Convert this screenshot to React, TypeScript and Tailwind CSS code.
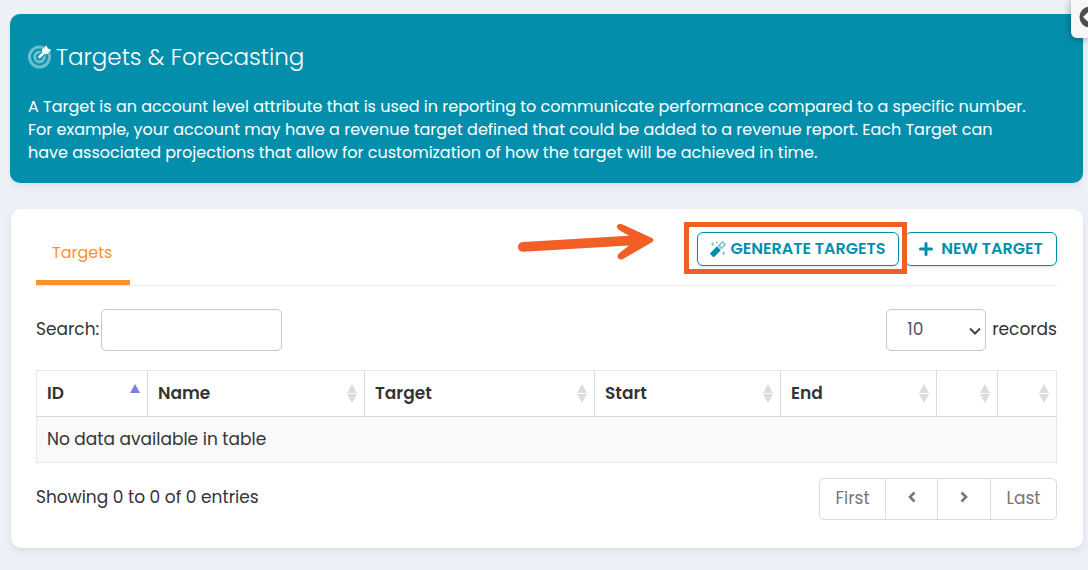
import { useState } from "react";

interface Column {
  label: string;
  width: string;
  hint: string;
}

const COLUMNS: Column[] = [
  { label: "ID", width: "w-[111px]", hint: "ID" },
  { label: "Name", width: "w-[217px]", hint: "Name" },
  { label: "Target", width: "w-[230px]", hint: "Target" },
  { label: "Start", width: "w-[186px]", hint: "Start" },
  { label: "End", width: "w-[156px]", hint: "End" },
  { label: "", width: "w-[61px]", hint: "Edit" },
  { label: "", width: "w-[59px]", hint: "Delete" },
];

const PAGE_SIZES = ["10", "25", "50", "100"];

function BullseyeIcon() {
  return (
    <svg viewBox="0 0 24 24" className="size-6 shrink-0" fill="none" aria-hidden="true">
      <g stroke="#fff" strokeOpacity="0.42">
        <circle cx="11.500" cy="12" r="10" strokeWidth="3" />
        <circle cx="11.500" cy="12" r="4.800" strokeWidth="3.200" />
      </g>
      <path d="M12 11.500 20 3.500" stroke="#038fac" strokeWidth="5" />
      <path d="M11.500 12 18 5.500" stroke="#fff" strokeWidth="2.600" strokeLinecap="round" />
      <path d="M14.300 4.800 18.300.9l1.200 2.900 3.200 1.200-4 4-3.600-.7z" fill="#fff" stroke="#fff" strokeWidth="0.800" strokeLinejoin="round" />
    </svg>
  );
}

function WandIcon() {
  return (
    <svg viewBox="0 0 16 16" className="size-4 shrink-0" fill="#038fac" aria-hidden="true">
      <path d="M.4 11.900 7 5.300l3.900 3.900-6.600 6.600q-.7.500-1.400 0L.4 13.300q-.6-.7 0-1.400z" />
      <path d="m7.600 4.700 4.300-4.300q.7-.6 1.400 0l2.400 2.400q.6.7 0 1.400l-4.300 4.300zm2.700-.1 1.300 1.300 2.500-2.500-1.300-1.300z" fillOpacity="0.5" fillRule="evenodd" />
      <path d="m2.600.8.700 1.600 1.600.7-1.600.7-.7 1.600-.7-1.600L.3 3.100l1.600-.7zM6.800 0l.4 1.100 1.100.4-1.100.5-.4 1.100-.5-1.100-1.100-.5 1.100-.4zM13.600 9.800l.7 1.600 1.600.7-1.600.7-.7 1.600-.7-1.600-1.600-.7 1.600-.7z" fillOpacity="0.55" />
    </svg>
  );
}

function SortIcon({ active }: { active?: boolean }) {
  return (
    <svg viewBox="0 0 12 20" className="h-5 w-3 shrink-0" aria-hidden="true">
      <path d="M1 9 6 0l5 9z" fill={active ? "#7c80dd" : "#dcdcdc"} />
      {!active && <path d="M1 10h10l-5 9z" fill="#dcdcdc" />}
    </svg>
  );
}

function Chevron({ d }: { d: string }) {
  return (
    <svg viewBox="0 0 12 12" className="size-3" fill="none" stroke="currentColor" strokeWidth="2.6" aria-hidden="true">
      <path d={d} />
    </svg>
  );
}

function Arrow() {
  return (
    <svg viewBox="0 0 136 36" className="absolute -top-2 -left-[179px] h-9 w-[136px]" aria-hidden="true">
      <path
        d="M5 18.1 111 11.8 101 6q-3.500-2.500-1.500-5 2-2 4.500-.7L134 14q3 2 0 4.200L105 35q-3 1.500-5-1-1.500-2.500 1.500-5L111 21.500 5 27.800q-5-.6-5-4.900 0-4.200 5-4.800z"
        fill="#f15e26"
      />
    </svg>
  );
}

export default function App() {
  const [search, setSearch] = useState("");
  const [pageSize, setPageSize] = useState("10");

  return (
    <div className="relative min-h-screen overflow-hidden bg-[#edf0f6] pt-3.5 pr-[5px] pb-5 pl-2.5 font-[Poppins,Inter,sans-serif] text-[17px] text-[#343434]">
      {/* Side drawer handle */}
      <button
        type="button"
        aria-label="Open side panel"
        className="absolute top-0 right-0 flex h-[38px] w-[17px] items-center overflow-hidden rounded-bl-md bg-[#f7f7f7] pb-1 pl-2 shadow-[0_1px_8px_rgba(0,0,0,0.35)]"
      >
        <svg viewBox="0 0 22 22" className="size-[22px] shrink-0" aria-hidden="true">
          <circle cx="11" cy="11" r="10.500" fill="#4d4d4d" />
          <path d="m11 4.500-7 6.500 7 6.500v-4h6v-5h-6z" fill="#fff" />
        </svg>
      </button>

      {/* Intro banner */}
      <header className="rounded-[10px] bg-[#038fac] px-[18px] pt-[27px] pb-[19px] text-white shadow-md shadow-slate-300/40">
        <h1 className="flex items-center gap-1 text-[23px] leading-8 font-light">
          <BullseyeIcon />
          Targets &amp; Forecasting
        </h1>
        <p className="mt-[22px] text-base leading-[23px]">
          A Target is an account level attribute that is used in reporting to communicate performance compared to a specific number.
          <br />
          For example, your account may have a revenue target defined that could be added to a revenue report. Each Target can
          <br />
          have associated projections that allow for customization of how the target will be achieved in time.
        </p>
      </header>

      <main className="mt-[26px] ml-px rounded-[10px] bg-white pr-[26px] pb-7 pl-[25px] shadow-md shadow-slate-300/50">
        {/* Tabs + actions */}
        <div className="flex items-start justify-between border-b border-[#ececee]">
          <a href="#targets" className="w-[94px] border-b-5 border-[#ff902f] px-4 pt-8 pb-[15px] text-base leading-6 text-[#ff902f]">
            Targets
          </a>
          <div className="flex gap-1.5 pt-[23px]">
            <div className="relative">
              <Arrow />
              <button type="button" className="flex h-[34px] w-[202px] items-center justify-center gap-1 rounded-md border border-[#038fac] bg-white text-base font-semibold whitespace-nowrap text-[#038fac] shadow">
                <WandIcon />
                GENERATE TARGETS
              </button>
              {/* Highlight frame over the button */}
              <div className="pointer-events-none absolute -top-2.5 -right-2 -bottom-2 -left-[13px] z-10 border-5 border-[#f15e26]" />
            </div>
            <button type="button" className="flex h-[34px] w-[152px] items-center justify-center gap-2 rounded-md border border-[#038fac] bg-white text-base font-semibold whitespace-nowrap text-[#038fac] shadow">
              <svg viewBox="0 0 14 14" className="size-3.5 shrink-0" aria-hidden="true">
                <path d="M7 1.500v11M1.500 7h11" stroke="currentColor" strokeWidth="3" strokeLinecap="round" />
              </svg>
              NEW TARGET
            </button>
          </div>
        </div>

        {/* Table controls */}
        <div className="mt-[23px] flex items-center justify-between">
          <label className="flex items-center gap-0.5">
            Search:
            <input
              type="search"
              value={search}
              onChange={(e) => setSearch(e.target.value)}
              className="h-[42px] w-[181px] rounded-[5px] border border-[#c8c8c8] px-3"
            />
          </label>
          <label className="flex items-center gap-1.5">
            <span className="relative">
              <select
                value={pageSize}
                onChange={(e) => setPageSize(e.target.value)}
                className="h-[42px] w-[100px] appearance-none rounded-[5px] border border-[#c8c8c8] bg-white px-5 text-[#555]"
              >
                {PAGE_SIZES.map((size) => (
                  <option key={size}>{size}</option>
                ))}
              </select>
              <svg viewBox="0 0 12 8" className="pointer-events-none absolute top-[18px] right-[5px] h-2 w-3" fill="none" aria-hidden="true">
                <path d="m1 1.500 5 5 5-5" stroke="#444" strokeWidth="2" />
              </svg>
            </span>
            records
          </label>
        </div>

        <table className="mt-[19px] w-full table-fixed border-collapse border border-[#e4e8ec]">
          <thead>
            <tr>
              {COLUMNS.map((col, i) => (
                <th key={col.hint} className={`${col.width} h-[46px] border-r border-b border-[#d9dadc] pr-1.5 pl-2.5 text-left font-semibold last:border-r-[#e4e8ec]`} aria-label={col.hint}>
                  <div className="flex items-center justify-between">
                    <span>{col.label}</span>
                    <SortIcon active={i === 0} />
                  </div>
                </th>
              ))}
            </tr>
          </thead>
          <tbody>
            <tr className="bg-[#f9f9f9]">
              <td colSpan={COLUMNS.length} className="h-[46px] px-2.5">No data available in table</td>
            </tr>
          </tbody>
        </table>

        <div className="mt-[15px] flex items-start justify-between">
          <p className="pt-1.5 leading-[26px]">Showing 0 to 0 of 0 entries</p>
          <nav aria-label="Pagination" className="flex h-[42px] divide-x divide-[#dcdcdc] rounded-[5px] border border-[#dcdcdc] text-[#777]">
            <button type="button" className="w-[66px]">First</button>
            <button type="button" aria-label="Previous" className="flex w-[52px] items-center justify-center pb-1">
              <Chevron d="M8.500 1.500 4 6l4.500 4.500" />
            </button>
            <button type="button" aria-label="Next" className="flex w-[53px] items-center justify-center pb-1">
              <Chevron d="M3.500 1.500 8 6l-4.500 4.500" />
            </button>
            <button type="button" className="w-[65px]">Last</button>
          </nav>
        </div>
      </main>
    </div>
  );
}
